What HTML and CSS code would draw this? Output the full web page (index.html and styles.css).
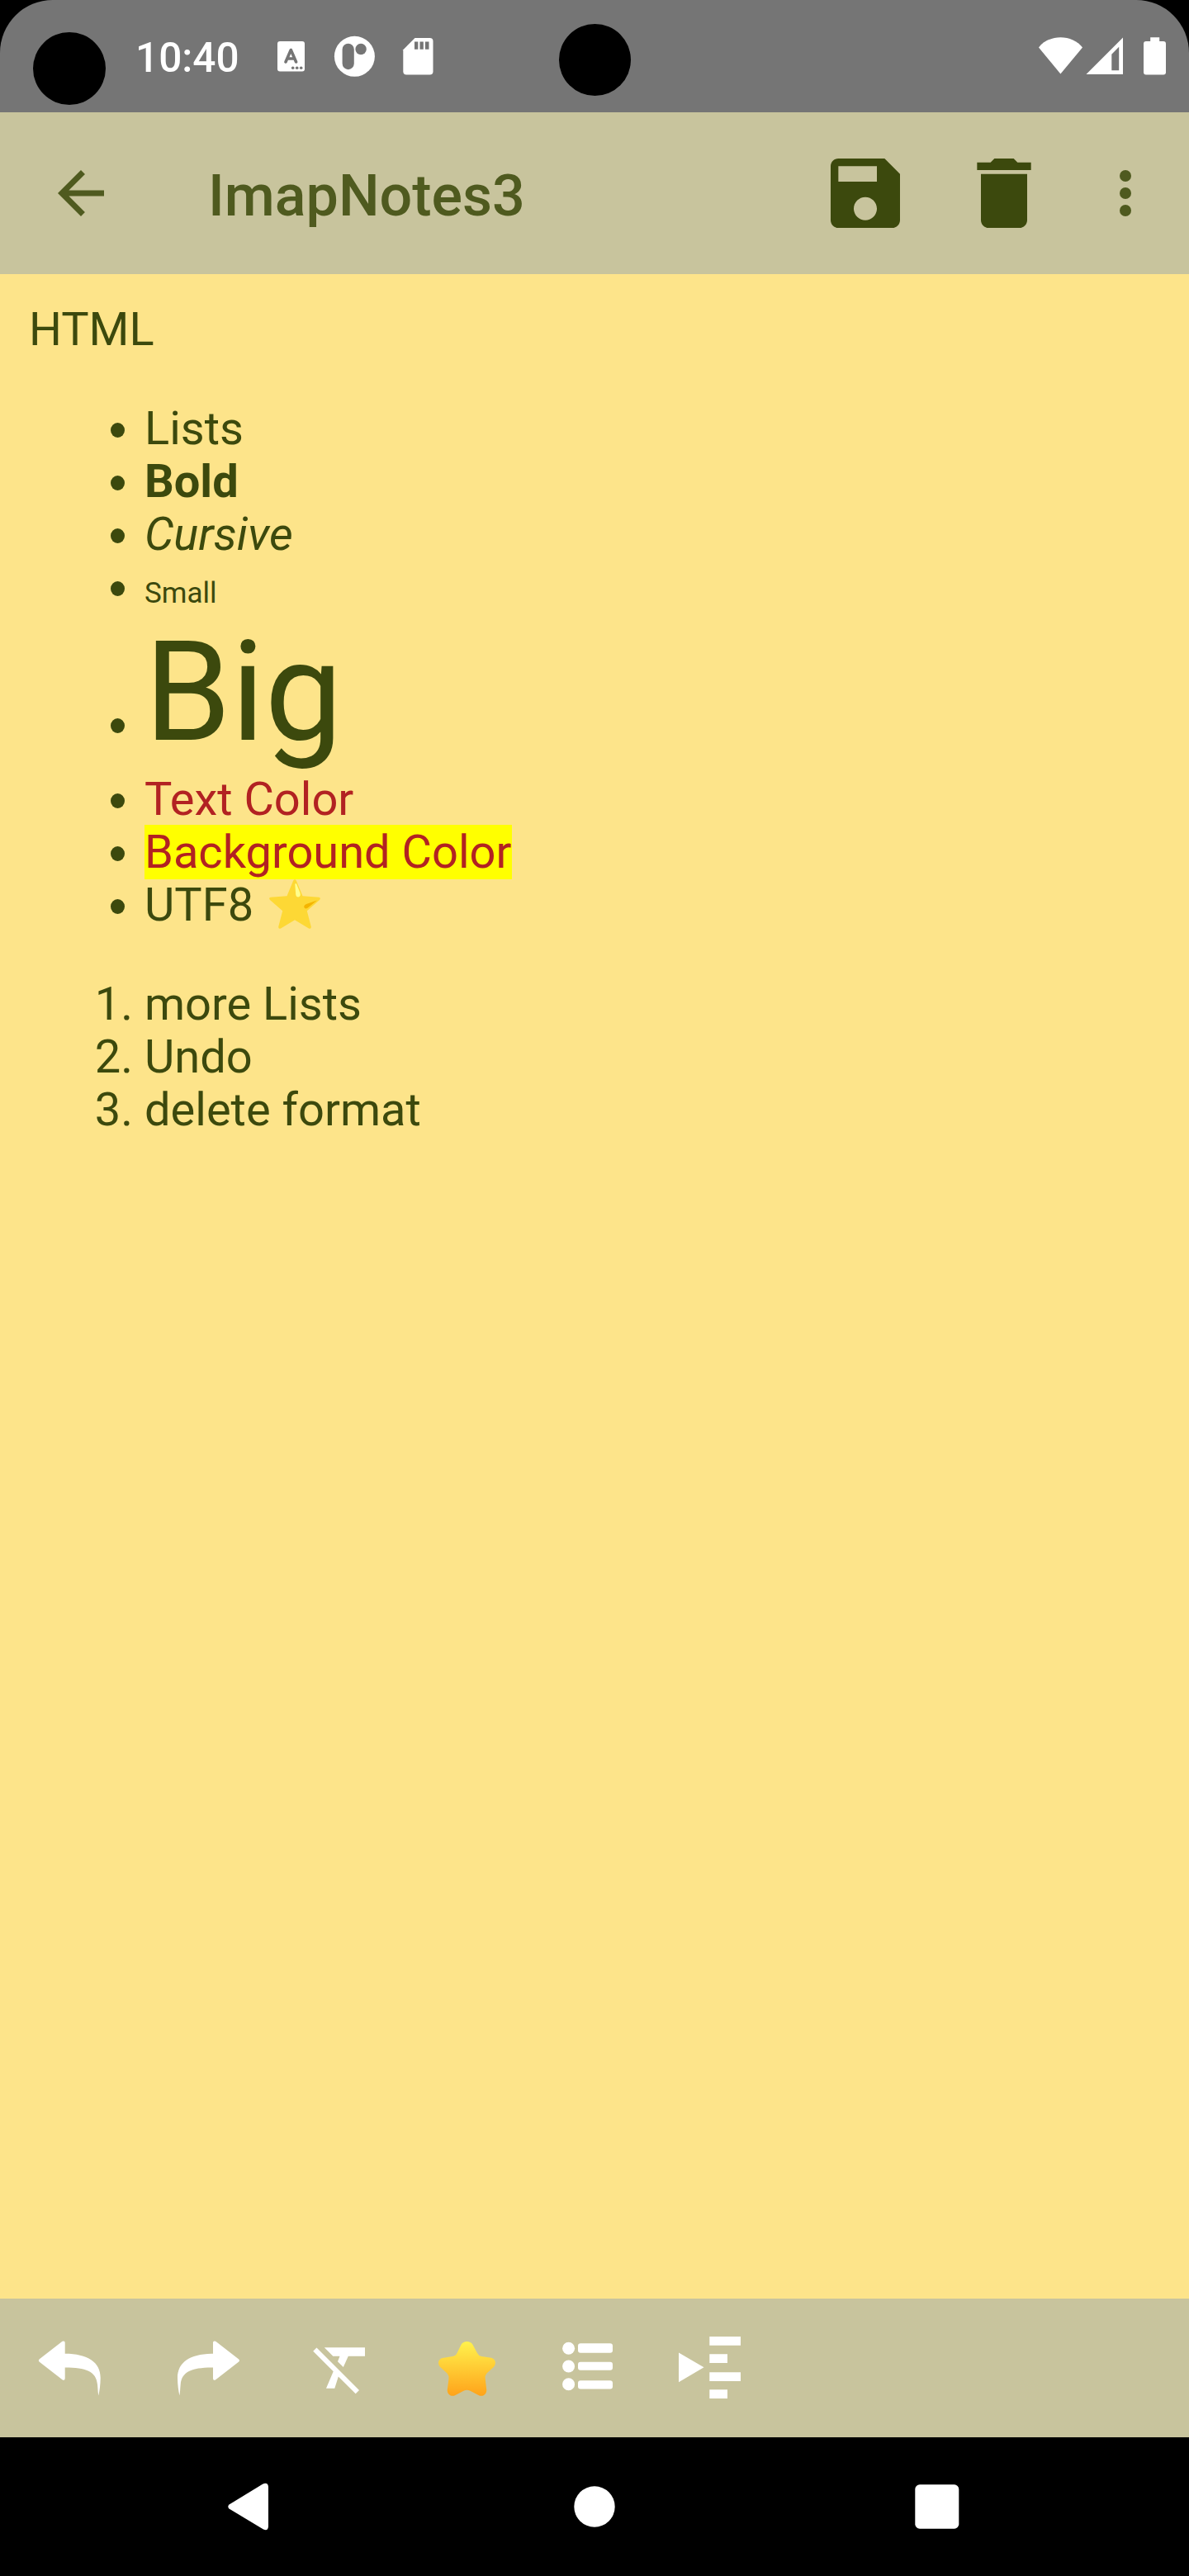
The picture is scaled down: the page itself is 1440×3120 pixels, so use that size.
FILE: index.html
```html
<!DOCTYPE html>
<html lang="en">
<head>
<meta charset="utf-8">
<title>ImapNotes3</title>
<link rel="stylesheet" href="styles.css">
</head>
<body>
<div class="screen">
  <header class="status">
    <span class="cutout cutout-left"></span>
    <span class="cutout cutout-center"></span>
    <span class="clock">10:40</span>
    <svg class="status-notifications" viewBox="330 0 200 136" fill="#fff">
      <path fill-rule="evenodd" d="M339 50h27a3 3 0 0 1 3 3v30.500a3 3 0 0 1-3 3h-27a3 3 0 0 1-3-3v-30.500a3 3 0 0 1 3-3z"/>
      <path d="M346 75l6.300-14.500L358.600 75M348.500 71h7.500" fill="none" stroke="#757575" stroke-width="3.600" stroke-linecap="round" stroke-linejoin="round"/>
      <g fill="#757575"><circle cx="354.700" cy="82.300" r="1.800"/><circle cx="359.700" cy="82.300" r="1.800"/><circle cx="364.700" cy="82.300" r="1.800"/></g>
      <circle cx="429.400" cy="68.300" r="24.500"/>
      <rect x="414.600" y="52.700" width="14.200" height="31.500" rx="7.100" fill="#757575"/>
      <circle cx="437.100" cy="59.500" r="6.700" fill="#757575"/>
      <path d="M502.500 46H520.500a4 4 0 0 1 4 4V86.500a4 4 0 0 1-4 4H492.300a4 4 0 0 1-4-4V60.300z"/>
      <path d="M502 50.500h4.300v9.300H502zM508.500 50.500h4.300v9.300h-4.300zM515 50.500h4.500v9.300H515z" fill="#757575"/>
    </svg>
    <svg class="status-system" viewBox="1250 0 190 136" fill="#fff">
      <path d="M1284.400 89.500L1258 57.500C1264 49.500 1274 45.200 1284.400 45.200S1305 49.500 1311 57.500z"/>
      <path fill-rule="evenodd" d="M1315.500 90L1360 45.500V90zM1346.300 65.700V85.300H1355.200V56.800z"/>
      <path d="M1393.200 45.300h11v4.700h4.800a3 3 0 0 1 3 3v34.500a3 3 0 0 1-3 3h-21a3 3 0 0 1-3-3V53a3 3 0 0 1 3-3h5.200z"/>
    </svg>
  </header>

  <nav class="appbar">
    <svg class="icon-back" viewBox="0 0 24 24"><path d="M20 11H7.830l5.590-5.590L12 4l-8 8 8 8 1.410-1.410L7.830 13H20v-2z"/></svg>
    <h1 class="title">ImapNotes3</h1>
    <svg class="icon-action" viewBox="0 0 24 24"><path d="M17 3H5c-1.110 0-2 .9-2 2v14c0 1.100.89 2 2 2h14c1.100 0 2-.9 2-2V7l-4-4zm-5 16c-1.660 0-3-1.340-3-3s1.340-3 3-3 3 1.340 3 3-1.340 3-3 3zm3-10H5V5h10v4z"/></svg>
    <svg class="icon-action" viewBox="0 0 24 24"><path d="M6 19c0 1.100.9 2 2 2h8c1.100 0 2-.9 2-2V7H6v12zM19 4h-3.500l-1-1h-5l-1 1H5v2h14V4z"/></svg>
    <svg class="icon-more" viewBox="0 0 24 24"><circle cx="12" cy="6" r="2"/><circle cx="12" cy="12" r="2"/><circle cx="12" cy="18" r="2"/></svg>
  </nav>

  <main class="note">
    <div>HTML</div>
    <ul class="bullets">
      <li>Lists</li>
      <li><b>Bold</b></li>
      <li><i>Cursive</i></li>
      <li><span class="small">Small</span></li>
      <li class="big-row"><span class="big">Big</span></li>
      <li><span class="red">Text Color</span></li>
      <li><span class="red marked">Background Color</span></li>
      <li>UTF8 <svg class="star" viewBox="0 0 62 60">
        <path d="M29.200 1.500Q31 -.8 32.800 1.500L40.500 20.300L60.200 21.800Q63 22.500 61 25L45.800 38.300L50.800 57.500Q51 60.500 48 59.500L31 49.200L14 59.500Q11 60.500 11.200 57.500L16.200 38.300L1 25Q-1 22.500 1.800 21.800L21.500 20.300z" fill="#fdd835"/>
        <path d="M31.300 6Q32 3.800 33.300 6L37.500 16.500Q38.500 21 35.300 21.500Q32.500 21.500 32.200 18z" fill="#ffff8d"/>
        <path d="M58 25.500L46.500 34.800Q43.500 36.500 42.300 34Q41.800 31.500 45 30z" fill="#f4b400"/>
      </svg></li>
    </ul>
    <ol class="numbers">
      <li>more Lists</li>
      <li>Undo</li>
      <li>delete format</li>
    </ol>
  </main>

  <div class="toolbar">
    <svg class="tool tool-wide" viewBox="0 2784 168 168"><path d="M47.500 2857.500L75.500 2835.800Q78.700 2834.500 78.700 2837.500V2850.800C106 2850.800 121.700 2861 121.700 2880C121.700 2888 120.500 2896 119.300 2901.500C118.500 2897 118.500 2893 118 2888C116.500 2872 104 2867.500 78.700 2867.500V2880.500Q78.700 2884 75.500 2882.300L47.500 2860.500Q46 2859 47.500 2857.500z"/></svg>
    <svg class="tool tool-wide" viewBox="0 2784 168 168"><path transform="matrix(-1 0 0 1 168.700 0)" d="M47.500 2857.500L75.500 2835.800Q78.700 2834.500 78.700 2837.500V2850.800C106 2850.800 121.700 2861 121.700 2880C121.700 2888 120.500 2896 119.300 2901.500C118.500 2897 118.500 2893 118 2888C116.500 2872 104 2867.500 78.700 2867.500V2880.500Q78.700 2884 75.500 2882.300L47.500 2860.500Q46 2859 47.500 2857.500z"/></svg>
    <svg class="tool" viewBox="336 2784 150 168"><path d="M379.200 2847.800L383.500 2843.500L435 2895L430.700 2899.300L409.800 2878.500L405.300 2892.700H395L403.700 2872.300zM392.800 2843.200H442V2853.800H421.800L415.800 2867L409 2860.200L411.500 2853.800H403.300z"/></svg>
    <svg class="tool" viewBox="486 2784 150 168">
      <defs><linearGradient id="gold" x1="0" y1="0" x2="0" y2="1"><stop offset="0" stop-color="#fff24d"/><stop offset="1" stop-color="#ffa31a"/></linearGradient></defs>
      <path fill="url(#gold)" d="M558.700 2839.500C561 2834.800 570 2834.800 572.300 2839.500L578 2850Q579.500 2853.300 583 2854L595 2855.800C600.500 2857 601.500 2863.500 597.500 2867.300L589.500 2874.500Q587 2877.500 587.700 2881L589.300 2895C589 2900.800 584 2903.300 579.500 2901L569.500 2895.700Q565.500 2893.700 561.500 2895.700L551.500 2901C547 2903.300 542 2900.800 541.700 2895L543.500 2881Q544 2877.500 541.500 2874.500L533.500 2867.300C529.500 2863.500 530.500 2857 536 2856L548 2854Q552 2853.300 553.500 2850z"/>
    </svg>
    <svg class="tool" viewBox="636 2784 150 168">
      <circle cx="688.600" cy="2844.300" r="7.500"/><circle cx="688.600" cy="2866" r="7.500"/><circle cx="688.600" cy="2887.700" r="7.500"/>
      <rect x="700" y="2838.300" width="42" height="11.500" rx="3"/><rect x="700" y="2860.700" width="42" height="10" rx="3"/><rect x="700" y="2883.200" width="42" height="10.300" rx="3"/>
    </svg>
    <svg class="tool" viewBox="786 2784 150 168"><path d="M822 2849.500L852.500 2867.300L822 2885.300zM859.300 2830H897v10.700H859.300zM859.300 2851.300H881v10.700H859.300zM859.300 2873.300H897V2884H859.300zM859.300 2894.300H881V2905H859.300z"/></svg>
  </div>

  <footer class="navbar">
    <svg viewBox="0 0 84 84"><path d="M18.500 39.500L59 14.700Q65.500 12 66 18V66Q65.500 72 60 69.500L18.500 44.500Q16 42 18.500 39.500z"/></svg>
    <svg viewBox="0 0 84 84"><circle cx="42" cy="42" r="24.700"/></svg>
    <svg viewBox="0 0 84 84"><rect x="11.300" y="15.300" width="53" height="53.400" rx="5.500"/></svg>
  </footer>
</div>
</body>
</html>
```
FILE: styles.css
```css
body {
  margin: 0;
  background: #000;
  font-family: Roboto, "Liberation Sans", sans-serif;
}

svg {
  display: block;
  flex: none;
}

.screen {
  width: 1440px;
  height: 3120px;
  display: flex;
  flex-direction: column;
  overflow: hidden;
}

.status {
  position: relative;
  height: 136px;
  flex: none;
  display: flex;
  align-items: center;
  background: #757575;
  border-radius: 64px 64px 0 0;
}

.cutout {
  position: absolute;
  border-radius: 50%;
  background: #000;
}

.cutout-left {
  left: 40px;
  top: 39px;
  width: 88px;
  height: 88px;
}

.cutout-center {
  left: 677px;
  top: 29px;
  width: 87px;
  height: 87px;
}

.clock {
  width: 166px;
  padding: 4px 0 0 164px;
  color: #fff;
  font-size: 49.5px;
  font-weight: 500;
  line-height: 58px;
}

.status-notifications {
  width: 200px;
  height: 136px;
}

.status-system {
  width: 190px;
  height: 136px;
  margin-left: auto;
}

.appbar {
  height: 196px;
  flex: none;
  display: flex;
  align-items: center;
  padding: 0 35px 0 56px;
  box-sizing: border-box;
  background: #c8c49d;
  fill: #3c490d;
}

.icon-back,
.icon-more {
  width: 84px;
  height: 84px;
  fill: #4f5a1f;
}

.icon-action {
  width: 112px;
  height: 112px;
  margin-right: 56px;
}

.icon-more {
  margin-left: -7px;
}

.title {
  flex: 1;
  margin: 6px 0 0 112px;
  color: #4f5a1f;
  font-size: 70px;
  font-weight: 500;
  line-height: 82px;
}

.note {
  flex: 1;
  padding: 35px;
  background: #fde48a;
  color: #3c490d;
  font-size: 56px;
  line-height: 64px;
}

.bullets,
.numbers {
  margin: 56px 0;
  padding-left: 140px;
}

.bullets {
  list-style: none;
}

.bullets li {
  height: 64px;
}

.bullets li::before {
  content: "";
  display: inline-block;
  width: 17px;
  height: 18px;
  margin: 0 24px 0 -41px;
  border-radius: 50%;
  background: currentColor;
  vertical-align: 8px;
}

.bullets .big-row {
  height: 193px;
  line-height: 191px;
}

.small {
  font-size: 35px;
}

.big {
  font-size: 168px;
}

.red {
  color: #b22222;
}

.marked {
  background: #ff0;
}

.star {
  display: inline-block;
  width: 62px;
  height: 60px;
  margin: -20px 0 -20px 5px;
  vertical-align: 10px;
}

.toolbar {
  height: 168px;
  flex: none;
  display: flex;
  background: #c8c49d;
  fill: #fff;
}

.tool {
  width: 150px;
  height: 168px;
}

.tool-wide {
  width: 168px;
}

.navbar {
  height: 168px;
  flex: none;
  display: flex;
  align-items: center;
  justify-content: space-between;
  padding: 0 259px;
  background: #000;
  fill: #fff;
}

.navbar svg {
  width: 84px;
  height: 84px;
}
```
